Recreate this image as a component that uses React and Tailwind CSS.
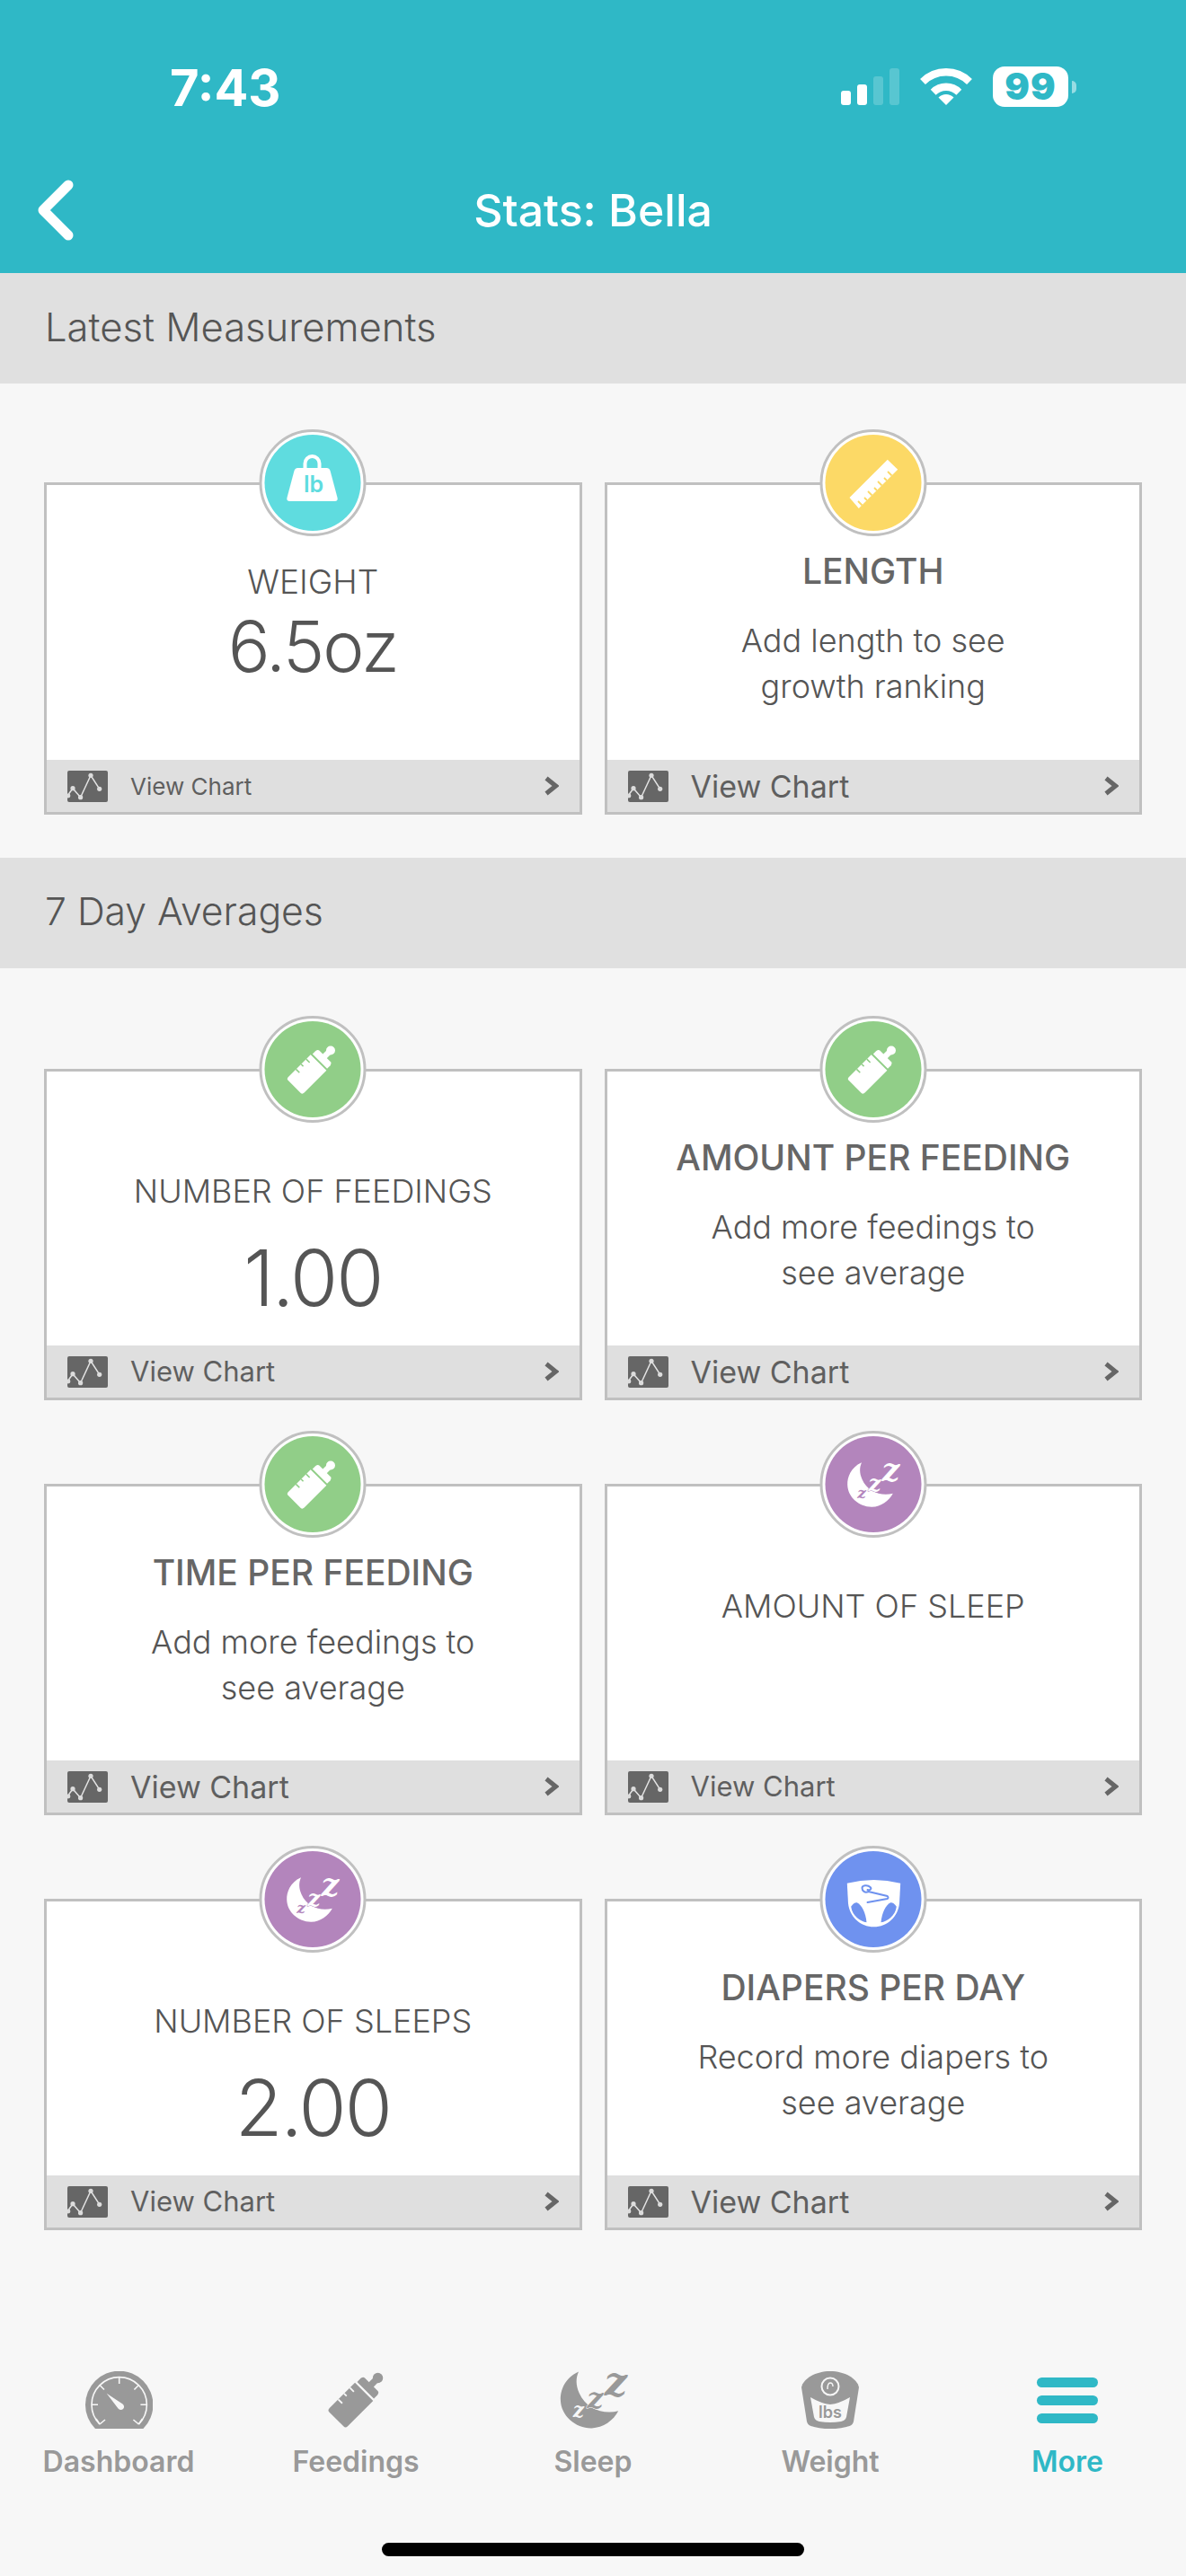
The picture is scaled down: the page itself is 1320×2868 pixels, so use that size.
import React from "react";

function BottleShape({ fill, notch }) {
  return (
    <g transform="translate(83 35) rotate(45)">
      <circle cx="0" cy="5" r="5" fill={fill} />
      <rect x="-3.2" y="5" width="6.4" height="10" fill={fill} />
      <path d="M-9 14 H9 Q11 14 11.5 17 V22 H-11.5 V17 Q-11 14 -9 14Z" fill={fill} />
      <path d="M-12.5 24 H12.5 V59 Q12.5 62 10 62 H-10 Q-12.5 62 -12.5 59Z" fill={fill} />
      <path d="M-12.5 31 H-7 M-12.5 39 H-9 M-12.5 47 H-7" stroke={notch} strokeWidth="1.6" />
    </g>
  );
}

function MoonShape({ fill, notch, zColor }) {
  return (
    <g>
      <path
        d="M46.5 35.3 C34 41 30.5 52 30.7 60 C31 74 44 85 58 84.7 C68 84.5 77 78 81.3 69.7 C68 73 53 68 47 54 C44 47 44 41 46.5 35.3Z"
        fill={fill}
      />
      <g className="[font-family:'DejaVu_Serif',serif]" fontWeight="700" fontStyle="italic" textAnchor="middle">
        <text x="46.5" y="75" fontSize="17" fill={notch}>z</text>
        <text x="61" y="67" fontSize="25" fill={zColor} stroke={notch} strokeWidth="0.8" paintOrder="stroke">z</text>
        <text x="79" y="56" fontSize="35" fill={zColor} stroke={notch} strokeWidth="0.8" paintOrder="stroke">z</text>
      </g>
    </g>
  );
}

function CircleIcon({ kind }) {
  const colors = {
    weight: "bg-[#5fdcdf]",
    length: "bg-[#fcd966]",
    bottle: "bg-[#91ce88]",
    moon: "bg-[#b385bc]",
    diaper: "bg-[#6f92ef]",
  };
  const hex = { weight: "#5fdcdf", length: "#fcd966", bottle: "#91ce88", moon: "#b385bc", diaper: "#6f92ef" }[kind];
  return (
    <div className="absolute left-1/2 top-[-62px] z-10 h-[119px] w-[119px] -translate-x-1/2 rounded-full border-[3px] border-[#c0c0c0] bg-white p-[3px]">
      <div className={`h-full w-full rounded-full ${colors[kind]} overflow-hidden`}>
        <svg viewBox="6 6 107 107" className="h-full w-full">
          {kind === "weight" && (
            <g>
              <path d="M51 44 V38 A8 8 0 0 1 67 38 V44" fill="none" stroke="#fff" strokeWidth="4" />
              <path d="M43 43 H75 Q78 43 79 46 L87 76 Q88 80 84 80 H34 Q30 80 31 76 L39 46 Q40 43 43 43Z" fill="#fff" />
              <text x="60.5" y="70" textAnchor="middle" fontSize="25" fontWeight="600" fill={hex} className="[font-family:Inter,sans-serif]">lb</text>
            </g>
          )}
          {kind === "length" && (
            <g>
              <polygon points="75.3,33.7 86.7,44.7 43.3,88 33,76" fill="#fff" />
              <path d="M80 51.5 L75.5 47 M74.5 57 L71.5 54 M69 62.5 L64.5 58 M63.5 68 L60.5 65 M58 73.5 L53.5 69 M52.5 79 L49.5 76 M47 84.5 L42.5 80" stroke={hex} strokeWidth="1.8" />
            </g>
          )}
          {kind === "bottle" && <BottleShape fill="#fff" notch={hex} />}
          {kind === "moon" && <MoonShape fill="#fff" notch={hex} zColor="#fff" />}
          {kind === "diaper" && (
            <g>
              <path d="M30.3 41.7 Q60 34.5 89.7 41.7 L88.5 64 C87 79 75 90.3 60 90.3 C45 90.3 33 79 31.5 64Z" fill="#fff" />
              <path d="M34.7 67.7 Q38 63 41.3 63.3 C47 66 51 75 52 85.3 C45 84 36 78 34.7 67.7Z" fill={hex} />
              <path d="M85.3 67.7 Q82 63 78.7 63.3 C73 66 69 75 68 85.3 C75 84 84 78 85.3 67.7Z" fill={hex} />
              <path d="M54 51 L75 56 Q77 58 75 59 L53 63 M54 51 C50 53 47 50 47 47 C47 44 53 43 56 46 C58 48 56 50 53 49" fill="none" stroke={hex} strokeWidth="2" strokeLinecap="round" />
            </g>
          )}
        </svg>
      </div>
    </div>
  );
}

function ChartIcon() {
  return (
    <svg viewBox="0 0 45 35" className="h-[35px] w-[45px] shrink-0">
      <rect width="45" height="35" rx="2" fill="#666" />
      <path d="M0 28 L6 19.7 L14.6 29.7 L26 5.3 L35.7 20.3" fill="none" stroke="#e4e4e4" strokeWidth="1.5" />
      <g fill="#dcdcdc">
        <circle cx="6" cy="19.7" r="2.6" />
        <circle cx="14.6" cy="29.7" r="2.6" />
        <circle cx="26" cy="5.3" r="2.6" />
        <circle cx="35.7" cy="20.3" r="2.6" />
        <circle cx="1" cy="28" r="2.4" />
      </g>
    </svg>
  );
}

function Footer({ size }) {
  return (
    <div className="flex h-[58px] shrink-0 items-center gap-[25px] bg-[#dfdfdf] pl-[23px] pr-[23px]">
      <ChartIcon />
      <span className={`flex-1 font-normal text-[#5f5f5f] ${size}`}>View Chart</span>
      <svg viewBox="0 0 17 22" className="h-[22px] w-[17px]">
        <path d="M3 2.5 L13.5 11 L3 19.5" fill="none" stroke="#666" strokeWidth="5" />
      </svg>
    </div>
  );
}

function Card({ icon, title, value, note, footer, variant, height = "h-[369px]" }) {
  return (
    <div className={`relative flex flex-col border-[3px] border-[#c0c0c0] bg-white ${height}`}>
      <CircleIcon kind={icon} />
      <div className="min-h-0 flex-1 text-center text-[#555]">
        {note ? (
          <>
            <div className="pt-[68px] text-[39px] font-medium leading-[56px] text-[#666]">{title}</div>
            <div className="mt-[24px] text-[36px] font-light leading-[51px]">
              {note[0]}
              <br />
              {note[1]}
            </div>
          </>
        ) : variant === "weight" ? (
          <>
            <div className="pt-[83px] text-[37px] font-light leading-[50px]">{title}</div>
            <div className="mt-[7px] text-[78px] font-light leading-[80px] tracking-[-2px]">{value}</div>
          </>
        ) : (
          <>
            <div className="pt-[108px] text-[36px] font-light leading-[50px]">{title}</div>
            {value && <div className="mt-[28px] text-[86px] font-light leading-[88px] tracking-[-2px]">{value}</div>}
          </>
        )}
      </div>
      <Footer size={footer} />
    </div>
  );
}

function Band({ size, children }) {
  return (
    <div className={`flex h-[123px] items-center bg-[#e0e0e0] pb-[2px] pl-[50px] font-light text-[#555] ${size}`}>{children}</div>
  );
}

function Tab({ label, active, children }) {
  return (
    <div className="flex flex-col items-center">
      <div className="flex h-[64px] items-center justify-center">{children}</div>
      <span className={`mt-[15px] text-[32px] font-semibold leading-[44px] ${active ? "text-[#2fb8c6]" : "text-[#999]"}`}>
        {label}
      </span>
    </div>
  );
}

export default function App() {
  const sm = "text-[26px]";
  const md = "text-[31px]";
  const lg = "text-[34px]";
  return (
    <div className="flex h-[2868px] w-[1320px] flex-col overflow-hidden bg-[#f7f7f7] [font-family:Inter,sans-serif]">
      <header className="h-[304px] shrink-0 bg-[#2fb8c6] text-white">
        <div className="flex items-center justify-between pl-[189px] pr-[122px] pt-[74px]">
          <span className="relative top-[2px] text-[56px] font-bold leading-[45px]">7:43</span>
          <div className="flex items-center gap-[23px]">
            <svg viewBox="0 0 65 41" className="h-[41px] w-[65px]">
              <rect x="0" y="25" width="11" height="16" rx="3" fill="#fff" />
              <rect x="18" y="18" width="11" height="23" rx="3" fill="#fff" />
              <rect x="36" y="9" width="11" height="32" rx="3" fill="#fff" opacity="0.2" />
              <rect x="54" y="0" width="11" height="41" rx="3" fill="#fff" opacity="0.2" />
            </svg>
            <svg viewBox="-29 -41 58 41" className="h-[41px] w-[58px]">
              <path d="M-26 -26 A36.8 36.8 0 0 1 26 -26" fill="none" stroke="#fff" strokeWidth="8.3" />
              <path d="M-14.3 -14.3 A20.2 20.2 0 0 1 14.3 -14.3" fill="none" stroke="#fff" strokeWidth="8.3" />
              <path d="M0 0 L-8.5 -8.5 A12 12 0 0 1 8.5 -8.5Z" fill="#fff" />
            </svg>
            <div className="flex items-center gap-[4px]">
              <div className="flex h-[45px] w-[84px] items-center justify-center rounded-[13px] bg-white text-[41px] font-black leading-none tracking-[1px] text-[#2fb8c6]">
                99
              </div>
              <div className="h-[14px] w-[5px] rounded-r-full bg-white/50" />
            </div>
          </div>
        </div>
        <div className="mt-[81px] grid grid-cols-[1fr_auto_1fr] items-center">
          <svg viewBox="0 0 42 68" className="ml-[40px] h-[68px] w-[42px]">
            <path d="M36 6 L8 34 L36 62" fill="none" stroke="#fff" strokeWidth="11" strokeLinecap="round" strokeLinejoin="round" />
          </svg>
          <span className="text-[50px] font-medium leading-[68px]">Stats: Bella</span>
          <span />
        </div>
      </header>

      <Band size="text-[43.6px]">Latest Measurements</Band>
      <div className="grid grid-cols-2 gap-x-[25px] px-[49px] pt-[110px]">
        <Card icon="weight" title="WEIGHT" value="6.5oz" footer={sm} variant="weight" height="h-[370px]" />
        <Card icon="length" title="LENGTH" note={["Add length to see", "growth ranking"]} footer={lg} height="h-[370px]" />
      </div>

      <div className="mt-[48px]">
        <Band size="text-[42.7px]">7 Day Averages</Band>
      </div>
      <div className="grid grid-cols-2 gap-x-[25px] gap-y-[93px] px-[49px] pt-[112px]">
        <Card icon="bottle" title="NUMBER OF FEEDINGS" value="1.00" footer={md} />
        <Card icon="bottle" title="AMOUNT PER FEEDING" note={["Add more feedings to", "see average"]} footer={lg} />
        <Card icon="bottle" title="TIME PER FEEDING" note={["Add more feedings to", "see average"]} footer={lg} />
        <Card icon="moon" title="AMOUNT OF SLEEP" footer={md} />
        <Card icon="moon" title="NUMBER OF SLEEPS" value="2.00" footer={md} />
        <Card icon="diaper" title="DIAPERS PER DAY" note={["Record more diapers to", "see average"]} footer={lg} />
      </div>

      <nav className="mt-[157px] grid [grid-template-columns:repeat(5,264px)]">
        <Tab label="Dashboard">
          <svg viewBox="0 0 75 64" className="h-[64px] w-[75px]">
            <path d="M11 64 A37.7 37.7 0 1 1 64.4 64Z" fill="#999" />
            <path d="M16 59 A30.7 30.7 0 1 1 59.4 59" fill="none" stroke="#f7f7f7" strokeWidth="1.6" />
            <path d="M37.7 7 V14 M16 15.5 L21 20.5 M59.4 15.5 L54.4 20.5 M7 37.3 H14 M68.4 37.3 H61.4 M16 59 L22 54 M16 59 L12 53 M59.4 59 L53.4 54 M59.4 59 L63.4 53" stroke="#f7f7f7" strokeWidth="1.6" fill="none" />
            <path d="M23.7 24.7 L41.5 36.5 A3.6 3.6 0 1 1 36.5 41.5Z" fill="#f7f7f7" />
          </svg>
        </Tab>
        <Tab label="Feedings">
          <svg viewBox="30 32 56 56" className="h-[64px] w-[64px]">
            <BottleShape fill="#999" notch="#f7f7f7" />
          </svg>
        </Tab>
        <Tab label="Sleep">
          <svg viewBox="30 35 59 50" className="h-[64px] w-[75px] overflow-visible">
            <MoonShape fill="#999" notch="#f7f7f7" zColor="#999" />
          </svg>
        </Tab>
        <Tab label="Weight">
          <svg viewBox="0 0 64 64" className="h-[64px] w-[64px]">
            <path d="M0 18 C2 8 16 0 32 0 C48 0 62 8 64 18 L58 56 C57 60 54 61 50 62 C38 65 26 65 14 62 C10 61 7 60 6 56Z" fill="#999" />
            <path d="M10 29 Q22 36 32 37 Q42 36 54 29 L50 51 Q49 55 44 56 Q32 58 20 56 Q15 55 14 51Z" fill="#f7f7f7" />
            <circle cx="32" cy="17" r="9.5" fill="none" stroke="#f7f7f7" strokeWidth="2" />
            <path d="M29 20 Q29 13 32 13 Q35 13 35 17" fill="none" stroke="#f7f7f7" strokeWidth="1.4" />
            <text x="32" y="52" textAnchor="middle" fontSize="18" fontWeight="600" fill="#999">lbs</text>
          </svg>
        </Tab>
        <Tab label="More" active>
          <div className="flex h-[51px] w-[68px] flex-col justify-between">
            <div className="h-[11px] rounded-full bg-[#2fb8c6]" />
            <div className="h-[11px] rounded-full bg-[#2fb8c6]" />
            <div className="h-[11px] rounded-full bg-[#2fb8c6]" />
          </div>
        </Tab>
      </nav>
      <div className="mx-auto mt-[68px] h-[15px] w-[470px] rounded-full bg-black" />
    </div>
  );
}
